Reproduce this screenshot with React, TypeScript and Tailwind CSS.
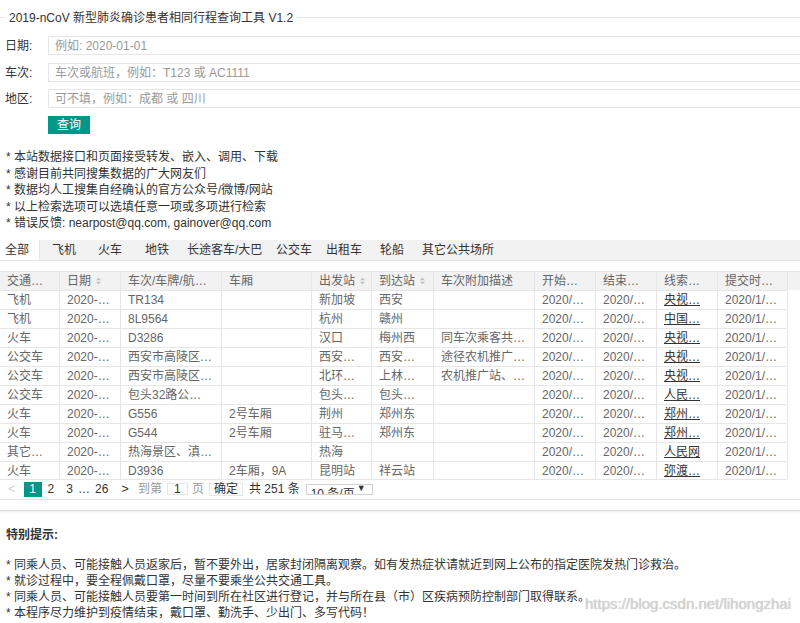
import type { ReactNode } from 'react'

const COLS = 'grid grid-cols-[60px_61px_101px_90px_60px_62px_101px_61px_61px_61px_70px]'

type Row = string[]

const HEADERS: { label: string; sort?: boolean }[] = [
  { label: '交通…' },
  { label: '日期', sort: true },
  { label: '车次/车牌/航…' },
  { label: '车厢' },
  { label: '出发站', sort: true },
  { label: '到达站', sort: true },
  { label: '车次附加描述' },
  { label: '开始…' },
  { label: '结束…' },
  { label: '线索…' },
  { label: '提交时…' },
]

const ROWS: Row[] = [
  ['飞机', '2020-…', 'TR134', '', '新加坡', '西安', '', '2020/…', '2020/…', '央视…', '2020/1/…'],
  ['飞机', '2020-…', '8L9564', '', '杭州', '赣州', '', '2020/…', '2020/…', '中国…', '2020/1/…'],
  ['火车', '2020-…', 'D3286', '', '汉口', '梅州西', '同车次乘客共…', '2020/…', '2020/…', '央视…', '2020/1/…'],
  ['公交车', '2020-…', '西安市高陵区…', '', '西安…', '西安…', '途径农机推广…', '2020/…', '2020/…', '央视…', '2020/1/…'],
  ['公交车', '2020-…', '西安市高陵区…', '', '北环…', '上林…', '农机推广站、…', '2020/…', '2020/…', '央视…', '2020/1/…'],
  ['公交车', '2020-…', '包头32路公…', '', '包头…', '包头…', '', '2020/…', '2020/…', '人民…', '2020/1/…'],
  ['火车', '2020-…', 'G556', '2号车厢', '荆州', '郑州东', '', '2020/…', '2020/…', '郑州…', '2020/1/…'],
  ['火车', '2020-…', 'G544', '2号车厢', '驻马…', '郑州东', '', '2020/…', '2020/…', '郑州…', '2020/1/…'],
  ['其它…', '2020-…', '热海景区、滇…', '', '热海', '', '', '2020/…', '2020/…', '人民网', '2020/1/…'],
  ['火车', '2020-…', 'D3936', '2车厢，9A', '昆明站', '祥云站', '', '2020/…', '2020/…', '弥渡…', '2020/1/…'],
]

const TABS: { label: string; w: string }[] = [
  { label: '飞机', w: 'w-[46px]' },
  { label: '火车', w: 'w-[47px]' },
  { label: '地铁', w: 'w-[42px]' },
  { label: '长途客车/大巴', w: 'w-[89px]' },
  { label: '公交车', w: 'w-[50px]' },
  { label: '出租车', w: 'w-[54px]' },
  { label: '轮船', w: 'w-[42px]' },
  { label: '其它公共场所', w: 'w-[120px]' },
]

const NOTES = [
  '* 本站数据接口和页面接受转发、嵌入、调用、下载',
  '* 感谢目前共同搜集数据的广大网友们',
  '* 数据均人工搜集自经确认的官方公众号/微博/网站',
  '* 以上检索选项可以选填任意一项或多项进行检索',
  '* 错误反馈: nearpost@qq.com, gainover@qq.com',
]

const TIPS = [
  '* 同乘人员、可能接触人员返家后，暂不要外出，居家封闭隔离观察。如有发热症状请就近到网上公布的指定医院发热门诊救治。',
  '* 就诊过程中，要全程佩戴口罩，尽量不要乘坐公共交通工具。',
  '* 同乘人员、可能接触人员要第一时间到所在社区进行登记，并与所在县（市）区疾病预防控制部门取得联系。',
  '* 本程序尽力维护到疫情结束，戴口罩、勤洗手、少出门、多写代码！',
]

function SortIcon() {
  return (
    <svg width="5" height="8" viewBox="0 0 5 8" className="ml-[5px] shrink-0">
      <path d="M0 3.2 L2.5 0.5 L5 3.2 Z" fill="#c2c2c2" />
      <path d="M0 4.8 L2.5 7.5 L5 4.8 Z" fill="#c2c2c2" />
    </svg>
  )
}

function Field({ label, placeholder }: { label: string; placeholder: string }) {
  return (
    <div className="flex items-center h-[19px]">
      <label className="w-[48px] shrink-0 pl-[5px] text-[#333]">{label}</label>
      <input
        className="w-[760px] shrink-0 h-[19px] border border-[#e6e6e6] pl-[6px] text-[12px] outline-none placeholder:text-[#999]"
        placeholder={placeholder}
      />
    </div>
  )
}

function Cell({ children, link }: { children: ReactNode; link?: boolean }) {
  return (
    <div className="border-r border-[#e6e6e6] px-[7px] truncate leading-[18px]">
      {link ? <span className="underline text-[#333]">{children}</span> : children}
    </div>
  )
}

export default function App() {
  return (
    <div className="relative w-[800px] h-[623px] overflow-hidden bg-white text-[12px] text-[#333] font-[family-name:Liberation_Sans,Noto_Sans_CJK_SC,sans-serif]">
      {/* legend */}
      <div className="flex items-center h-[35px]">
        <div className="w-[5px] h-px bg-[#e6e6e6]" />
        <span className="px-[4px]">2019-nCoV 新型肺炎确诊患者相同行程查询工具 V1.2</span>
        <div className="flex-1 h-px bg-[#e6e6e6]" />
      </div>

      <div className="mt-[1px]">
        <Field label="日期:" placeholder="例如: 2020-01-01" />
        <div className="mt-[8px]">
          <Field label="车次:" placeholder="车次或航班，例如：T123 或 AC1111" />
        </div>
        <div className="mt-[7px]">
          <Field label="地区:" placeholder="可不填，例如：成都 或 四川" />
        </div>
        <button className="mt-[8px] ml-[48px] w-[42px] h-[18px] bg-[#009688] text-white text-[12px] leading-[18px] block">
          查询
        </button>
      </div>

      <div className="mt-[15px] pl-[6px] leading-[16.5px]">
        {NOTES.map(n => (
          <div key={n}>{n}</div>
        ))}
      </div>

      {/* tabs */}
      <div className="mt-[8px] flex h-[21px] bg-[#f2f2f2] border-b border-[#e6e6e6]">
        <div className="w-[40px] bg-white border-r border-[#e6e6e6] pl-[5px] leading-[20px]">全部</div>
        {TABS.map(t => (
          <div key={t.label} className={`${t.w} shrink-0 pl-[12px] leading-[20px] whitespace-nowrap`}>
            {t.label}
          </div>
        ))}
      </div>

      {/* table */}
      <div className="mt-[10px] text-[#666]">
        <div className="h-[19px] bg-[#f2f2f2] border-t border-[#e6e6e6]">
          <div className={`${COLS} w-[787px]`}>
            {HEADERS.map(h => (
              <div key={h.label} className="border-r border-[#e6e6e6] px-[7px] leading-[18px] flex items-center whitespace-nowrap overflow-hidden">
                <span>{h.label}</span>
                {h.sort && <SortIcon />}
              </div>
            ))}
          </div>
        </div>
        {ROWS.map((r, i) => (
          <div key={i} className={`${COLS} w-[787px] h-[19px] border-t border-[#e6e6e6] ${i === ROWS.length - 1 ? 'border-b' : ''}`}>
            {r.map((c, j) => (
              <Cell key={j} link={j === 9}>{c}</Cell>
            ))}
          </div>
        ))}
      </div>

      {/* pagination */}
      <div className="h-[20px] border-b border-[#e6e6e6] flex items-center text-[12px] text-[#333]">
        <span className="ml-[8px] text-[#d2d2d2] text-[13px]">&lt;</span>
        <span className="ml-[8px] w-[18px] h-[15px] bg-[#009688] text-white flex items-center justify-center">1</span>
        <span className="ml-[6px]">2</span>
        <span className="ml-[12px]">3</span>
        <span className="ml-[5px]">…</span>
        <span className="ml-[5px]">26</span>
        <span className="ml-[13px] text-[13px]">&gt;</span>
        <span className="ml-[9px] text-[#999]">到第</span>
        <span className="ml-[5px] w-[21px] h-[12px] border border-[#e6e6e6] flex items-center justify-center text-[#333]">1</span>
        <span className="ml-[4px] text-[#999]">页</span>
        <span className="ml-[5px] w-[34px] h-[13px] border border-[#e6e6e6] flex items-center justify-center">确定</span>
        <span className="ml-[6px]">共 251 条</span>
        <div className="relative ml-[6px] w-[67px] h-[11px] border border-[#d2d2d2] overflow-hidden">
          <span className="absolute left-[4px] top-[3px] leading-[12px] whitespace-nowrap">10 条/页</span>
          <span className="absolute right-[6px] -top-[3px] text-[9px] leading-[12px]">▼</span>
        </div>
      </div>
      <div className="h-[11px] border-b border-[#dcdcdc] shadow-[0_1px_2px_rgba(0,0,0,0.08)]" />

      <div className="mt-[16px] pl-[6px] font-bold leading-[16px]">特别提示:</div>
      <div className="mt-[14px] pl-[6px] leading-[16px]">
        {TIPS.map(t => (
          <div key={t} className="whitespace-nowrap">{t}</div>
        ))}
      </div>

      <div className="absolute right-[9px] bottom-[8px] text-[15px] text-[#d4d4d4] [text-shadow:0_0_1px_#bbb]">
        https://blog.csdn.net/lihongzhai
      </div>
    </div>
  )
}
